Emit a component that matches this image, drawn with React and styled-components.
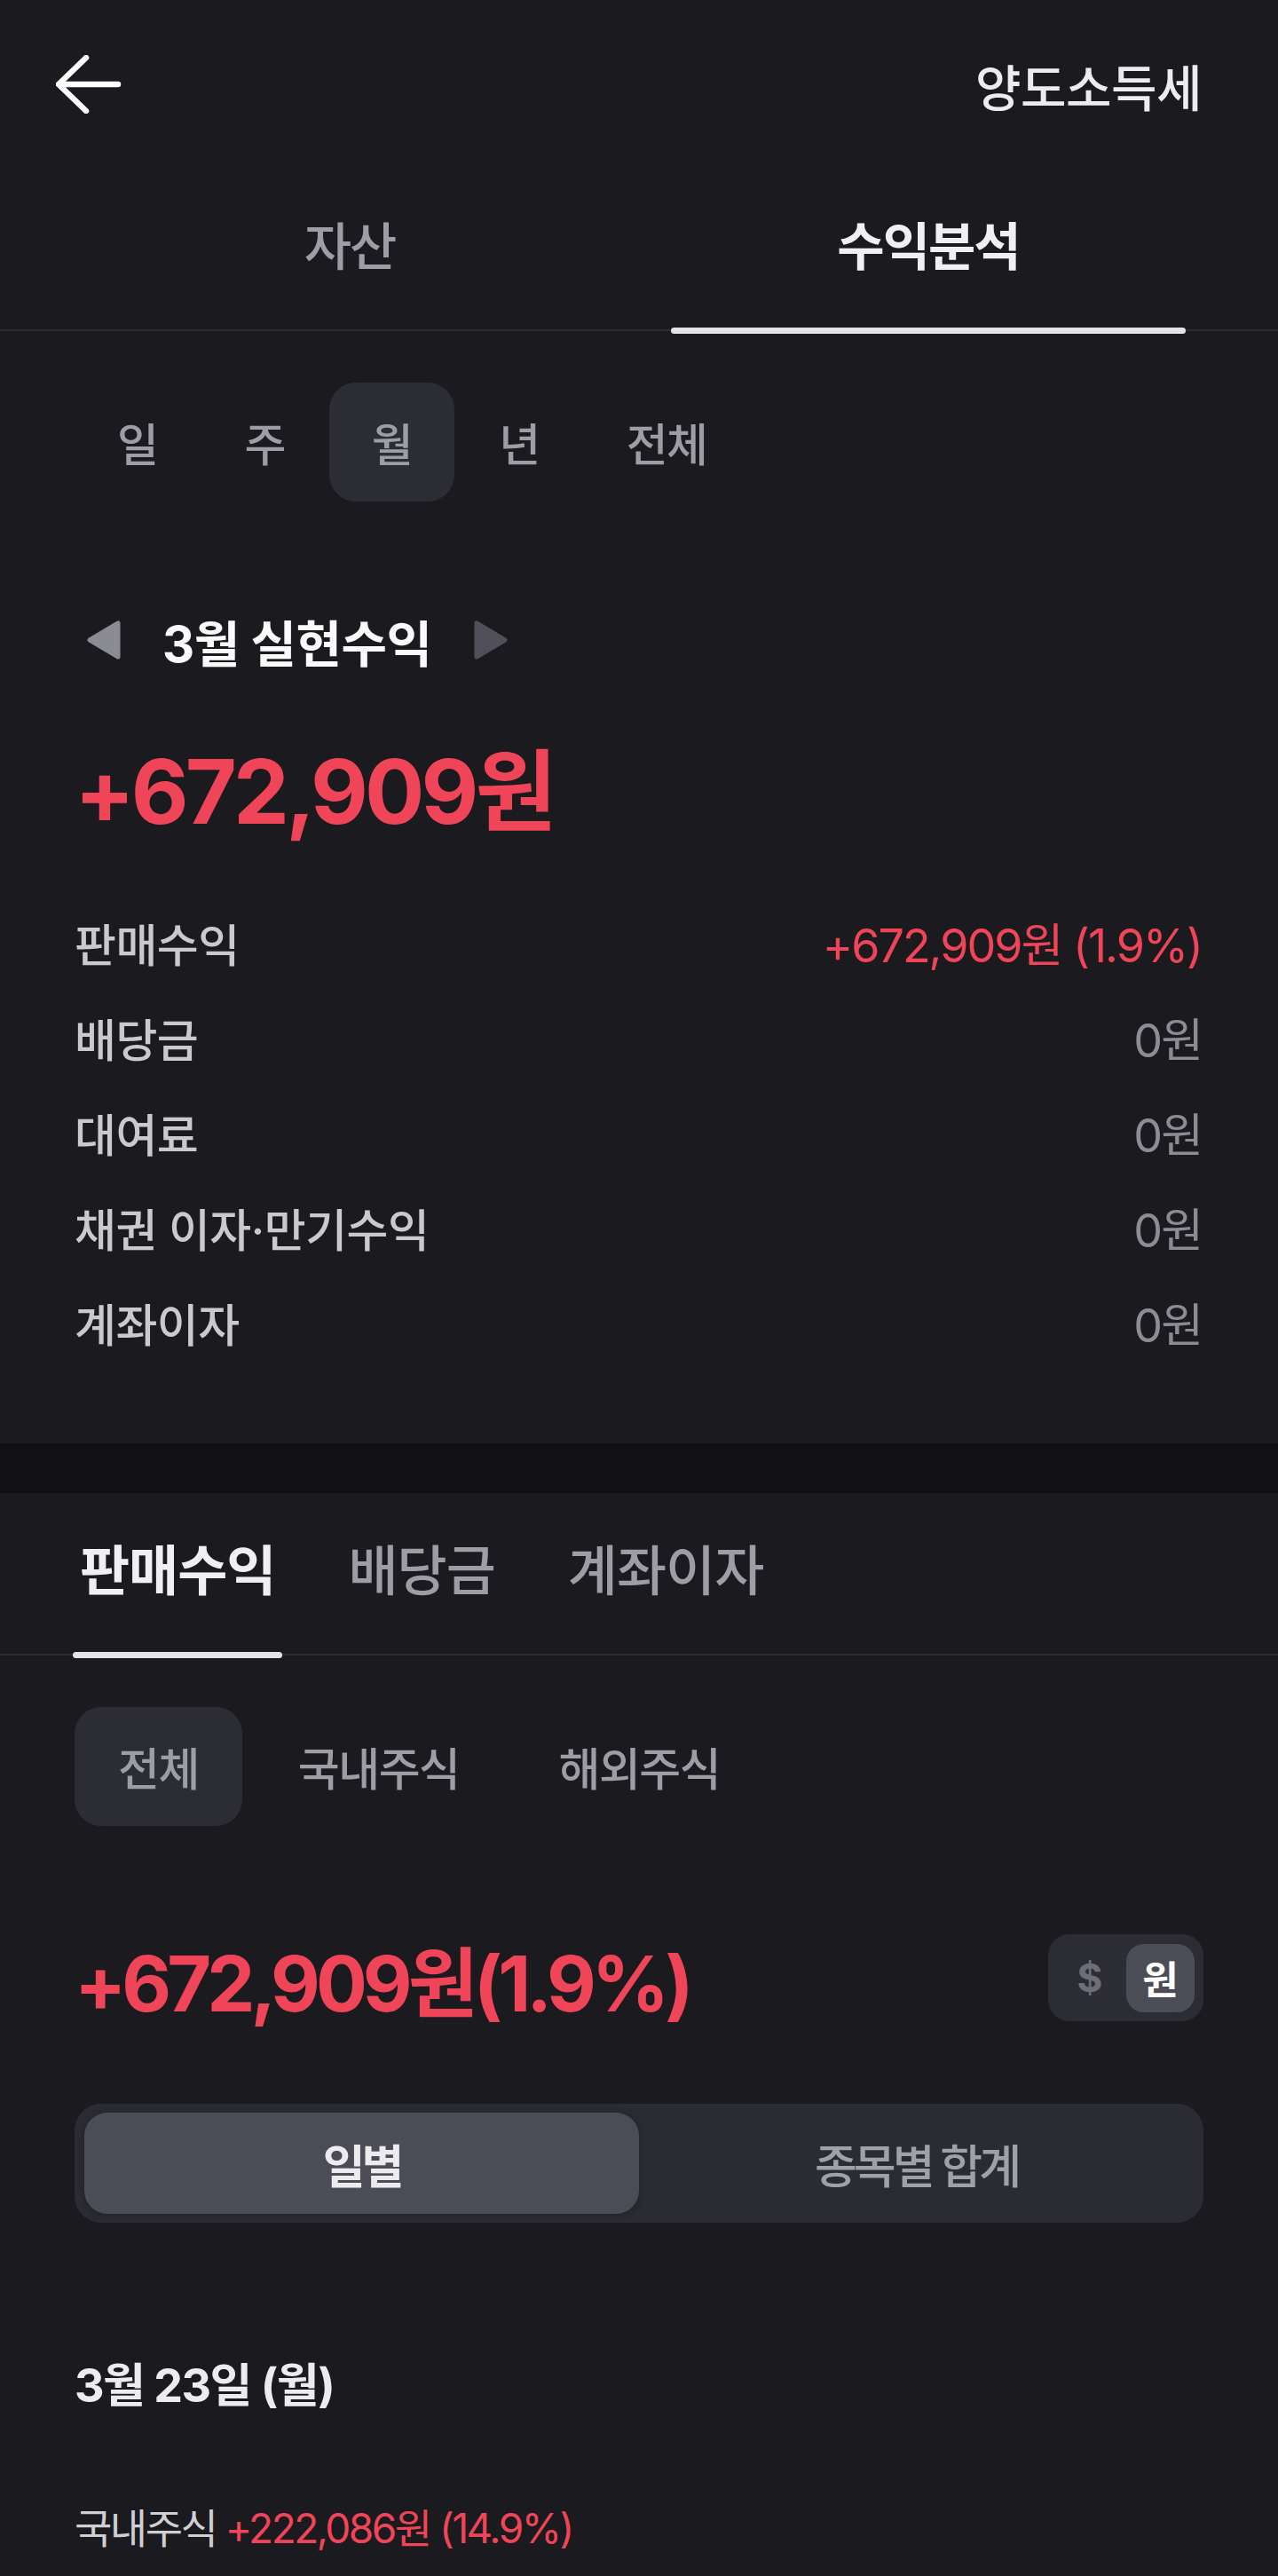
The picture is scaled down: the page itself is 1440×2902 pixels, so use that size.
import React, { useState } from "react";
import styled, { createGlobalStyle } from "styled-components";

const GlobalStyle = createGlobalStyle`
  html, body {
    margin: 0;
    padding: 0;
    background: #1a1a1f;
  }
  body {
    font-family: "Inter", "Noto Sans CJK KR", sans-serif;
    color: #f0f0f2;
  }
`;

const RED = "#f04458";

const Page = styled.div`
  width: 1440px;
  min-height: 2902px;
  background: #1a1a1f;
`;

const Header = styled.header`
  height: 190px;
  display: flex;
  align-items: center;
  justify-content: space-between;
  padding: 0 86px 0 63px;
  box-sizing: border-box;
`;

const BackButton = styled.button`
  background: none;
  border: none;
  padding: 0;
  display: flex;
  cursor: pointer;
`;

const Title = styled.h1`
  margin: 0;
  font-size: 56px;
  font-weight: 500;
  letter-spacing: -0.5px;
  color: #ececef;
`;

const TabBar = styled.nav`
  display: flex;
  gap: ${(p) => p.$gap}px;
  padding: 0 ${(p) => p.$pad}px;
  height: 181px;
  border-bottom: 2px solid #2b2b31;
`;

const Tab = styled.div`
  position: relative;
  flex: ${(p) => (p.$stretch ? 1 : "none")};
  padding: 0 ${(p) => (p.$stretch ? 0 : 8)}px 63px;
  display: flex;
  align-items: flex-end;
  justify-content: center;
  font-size: ${(p) => p.$size}px;
  line-height: 60px;
  letter-spacing: ${(p) => p.$ls}px;
  font-weight: ${(p) => (p.$active ? 700 : 500)};
  color: ${(p) => (p.$active ? "#f0f0f2" : "#9d9da5")};
  cursor: pointer;
`;

const Indicator = styled.span`
  position: absolute;
  left: 0;
  right: 0;
  bottom: -5px;
  height: 7px;
  border-radius: 4px;
  background: #e4e4e7;
`;

const ChipRow = styled.div`
  display: flex;
  gap: ${(p) => p.$gap}px;
  padding: 0 ${(p) => p.$left}px;
  margin-top: 58px;
`;

const Chip = styled.button`
  height: 134px;
  padding: 0 ${(p) => p.$pad}px;
  border: none;
  border-radius: 30px;
  background: ${(p) => (p.$active ? "#2c2c34" : "transparent")};
  color: #9d9da5;
  font-family: inherit;
  font-size: 51px;
  font-weight: 500;
  letter-spacing: -1.5px;
  cursor: pointer;
`;

const PeriodTitle = styled.div`
  display: flex;
  align-items: center;
  height: 60px;
  margin-top: 126px;
  padding-left: 97px;
  gap: 46px;
`;

const PeriodText = styled.h2`
  margin: 0;
  font-size: 56px;
  font-weight: 700;
  letter-spacing: -0.5px;
  color: #fafafa;
`;

const BigAmount = styled.div`
  margin-top: 81px;
  padding-left: 84px;
  height: 120px;
  line-height: 120px;
  font-size: 100px;
  font-weight: 700;
  letter-spacing: -4px;
  color: ${RED};
`;

const List = styled.ul`
  list-style: none;
  margin: 56px 0 0;
  padding: 0 86px 83px 84px;
`;

const Row = styled.li`
  height: 107px;
  display: flex;
  align-items: center;
  justify-content: space-between;
`;

const Label = styled.span`
  font-size: 51px;
  font-weight: 500;
  letter-spacing: -0.5px;
  color: #c9c9ce;
`;

const Value = styled.span`
  font-size: 52px;
  letter-spacing: -2px;
  color: ${(p) => (p.$positive ? RED : "#8c8c94")};
`;

const Band = styled.div`
  height: 56px;
  background: #111114;
`;

const TotalRow = styled.div`
  display: flex;
  align-items: center;
  justify-content: space-between;
  height: 98px;
  margin-top: 122px;
  padding: 0 84px;
`;

const TotalAmount = styled.div`
  font-size: 86px;
  font-weight: 700;
  letter-spacing: -5px;
  color: ${RED};
`;

const Toggle = styled.div`
  display: flex;
  align-items: center;
  height: 98px;
  padding: 0 10px 0 0;
  box-sizing: border-box;
  border-radius: 24px;
  background: #2c2c34;
`;

const ToggleItem = styled.span`
  width: ${(p) => (p.$active ? 77 : 88)}px;
  height: 77px;
  display: flex;
  align-items: center;
  justify-content: center;
  padding-left: ${(p) => (p.$active ? 0 : 6)}px;
  box-sizing: border-box;
  border-radius: 20px;
  background: ${(p) => (p.$active ? "#4d4d57" : "transparent")};
  color: ${(p) => (p.$active ? "#ffffff" : "#6e6e78")};
  font-size: 44px;
  font-weight: 700;
`;

const Segmented = styled.div`
  display: flex;
  margin: 93px 84px 0;
  height: 134px;
  padding: 10px 11px;
  box-sizing: border-box;
  border-radius: 30px;
  background: #2b2b33;
`;

const Segment = styled.button`
  flex: 1;
  border: none;
  border-radius: 26px;
  background: ${(p) => (p.$active ? "#4c4c56" : "transparent")};
  box-shadow: ${(p) => (p.$active ? "0 2px 8px rgba(0,0,0,0.25)" : "none")};
  color: ${(p) => (p.$active ? "#ececef" : "#a0a0a8")};
  font-family: inherit;
  font-size: 52px;
  font-weight: ${(p) => (p.$active ? 700 : 500)};
  letter-spacing: -4px;
  cursor: pointer;
`;

const DateTitle = styled.h3`
  margin: 154px 0 0;
  padding-left: 84px;
  height: 60px;
  line-height: 60px;
  font-size: 52px;
  font-weight: 700;
  letter-spacing: -1.5px;
  color: #ececef;
`;

const DayLine = styled.p`
  margin: 100px 0 0;
  padding-left: 84px;
  height: 60px;
  line-height: 60px;
  font-size: 46px;
  letter-spacing: -2.5px;
  color: #d0d0d4;
  span {
    color: ${RED};
  }
`;

const ArrowLeft = () => (
  <svg width="74" height="66" viewBox="0 0 74 66" fill="none">
    <path
      d="M34 3 L3 33 L34 63 M3 33 H70"
      stroke="#ffffff"
      strokeWidth="6.5"
      strokeLinecap="round"
      strokeLinejoin="round"
    />
  </svg>
);

const Caret = ({ dir, color }) => (
  <svg width="40" height="44" viewBox="0 0 40 44">
    <path
      d={dir === "left" ? "M36 3 L36 41 L4 22 Z" : "M4 3 L4 41 L36 22 Z"}
      fill={color}
      stroke={color}
      strokeWidth="5"
      strokeLinejoin="round"
    />
  </svg>
);

const rows = [
  { label: "판매수익", value: "+672,909원 (1.9%)", positive: true },
  { label: "배당금", value: "0원" },
  { label: "대여료", value: "0원" },
  { label: "채권 이자·만기수익", value: "0원" },
  { label: "계좌이자", value: "0원" },
];

export default function App() {
  const [period, setPeriod] = useState("월");
  const [kind, setKind] = useState("판매수익");
  const [market, setMarket] = useState("전체");
  const [view, setView] = useState("일별");

  return (
    <Page>
      <GlobalStyle />
      <Header>
        <BackButton aria-label="뒤로">
          <ArrowLeft />
        </BackButton>
        <Title>양도소득세</Title>
      </Header>

      <TabBar $gap={72} $pad={104}>
        <Tab $stretch $size={58} $ls={-2}>자산</Tab>
        <Tab $stretch $size={58} $ls={-2} $active>
          수익분석
          <Indicator />
        </Tab>
      </TabBar>

      <ChipRow $gap={2} $left={84}>
        {["일", "주", "월", "년", "전체"].map((p) => (
          <Chip key={p} $pad={48} $active={period === p} onClick={() => setPeriod(p)}>
            {p}
          </Chip>
        ))}
      </ChipRow>

      <PeriodTitle>
        <Caret dir="left" color="#8b8b93" />
        <PeriodText>3월 실현수익</PeriodText>
        <Caret dir="right" color="#50505a" />
      </PeriodTitle>

      <BigAmount>+672,909원</BigAmount>

      <List>
        {rows.map((r) => (
          <Row key={r.label}>
            <Label>{r.label}</Label>
            <Value $positive={r.positive}>{r.value}</Value>
          </Row>
        ))}
      </List>

      <Band />

      <TabBar $gap={66} $pad={82}>
        {["판매수익", "배당금", "계좌이자"].map((t) => (
          <Tab key={t} $size={61} $ls={-1} $active={kind === t} onClick={() => setKind(t)}>
            {t}
            {kind === t && <Indicator />}
          </Tab>
        ))}
      </TabBar>

      <ChipRow $gap={14} $left={84}>
        {["전체", "국내주식", "해외주식"].map((m) => (
          <Chip key={m} $pad={49} $active={market === m} onClick={() => setMarket(m)}>
            {m}
          </Chip>
        ))}
      </ChipRow>

      <TotalRow>
        <TotalAmount>+672,909원(1.9%)</TotalAmount>
        <Toggle>
          <ToggleItem>$</ToggleItem>
          <ToggleItem $active>원</ToggleItem>
        </Toggle>
      </TotalRow>

      <Segmented>
        {["일별", "종목별 합계"].map((v) => (
          <Segment key={v} $active={view === v} onClick={() => setView(v)}>
            {v}
          </Segment>
        ))}
      </Segmented>

      <DateTitle>3월 23일 (월)</DateTitle>
      <DayLine>
        국내주식 <span>+222,086원 (14.9%)</span>
      </DayLine>
    </Page>
  );
}
